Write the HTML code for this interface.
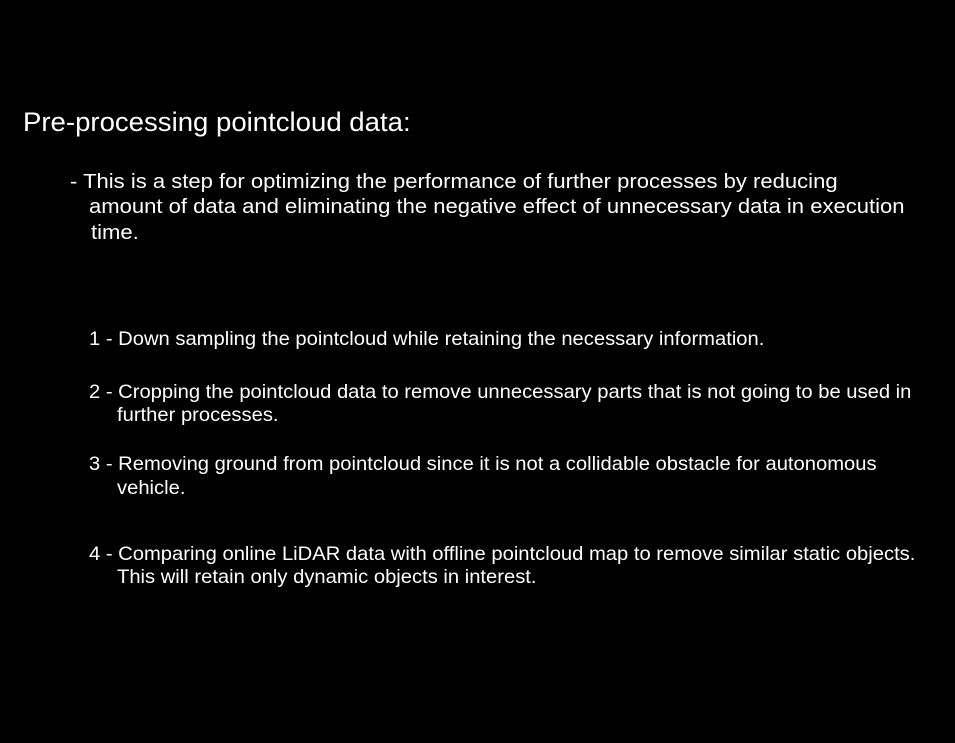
<!DOCTYPE html>
<html><head><meta charset="utf-8"><style>
html,body{margin:0;padding:0;background:#000;width:955px;height:743px;overflow:hidden}
div{position:absolute;color:#fff;font-family:"Liberation Sans",sans-serif;white-space:nowrap;line-height:1;transform-origin:0 50%}
.t{font-size:26.5px;transform:scaleX(1.04)}
.p{font-size:20.5px;transform:scaleX(1.075)}
.l{font-size:19.5px;transform:scaleX(1.035)}
</style></head><body>
<div class="t" style="left:23px;top:109px">Pre-processing pointcloud data:</div>
<div class="p" style="left:70px;top:172px">- This is a step for optimizing the performance of further processes by reducing</div>
<div class="p" style="left:89px;top:197px">amount of data and eliminating the negative effect of unnecessary data in execution</div>
<div class="p" style="left:91px;top:223px">time.</div>
<div class="l" style="left:89px;top:330px">1 - Down sampling the pointcloud while retaining the necessary information.</div>
<div class="l" style="left:89px;top:383px">2 - Cropping the pointcloud data to remove unnecessary parts that is not going to be used in</div>
<div class="l" style="left:117px;top:406px">further processes.</div>
<div class="l" style="left:89px;top:455px">3 - Removing ground from pointcloud since it is not a collidable obstacle for autonomous</div>
<div class="l" style="left:117px;top:479px">vehicle.</div>
<div class="l" style="left:89px;top:545px">4 - Comparing online LiDAR data with offline pointcloud map to remove similar static objects.</div>
<div class="l" style="left:117px;top:568px">This will retain only dynamic objects in interest.</div>
</body></html>
